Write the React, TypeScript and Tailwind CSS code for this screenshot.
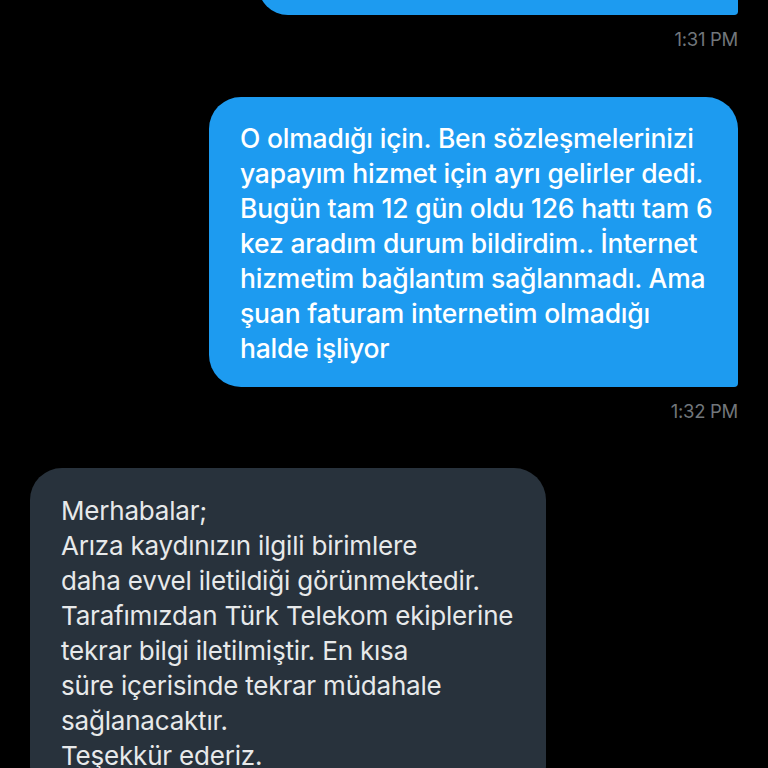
import React from 'react';

const font = { fontFamily: 'Inter, "Noto Sans", sans-serif' };

const Timestamp = ({ time }: { time: string }) => (
    <div className="flex justify-end mt-[14px] text-[18.5px] leading-[20px] text-[#71767b] tracking-[-0.3px]">{time}</div>
);

const sent = `O olmadığı için. Ben sözleşmelerinizi
yapayım hizmet için ayrı gelirler dedi.
Bugün tam 12 gün oldu 126 hattı tam 6
kez aradım durum bildirdim.. İnternet
hizmetim bağlantım sağlanmadı. Ama
şuan faturam internetim olmadığı
halde işliyor`;

const received = `Merhabalar;
Arıza kaydınızın ilgili birimlere
daha evvel iletildiği görünmektedir.
Tarafımızdan Türk Telekom ekiplerine
tekrar bilgi iletilmiştir. En kısa
süre içerisinde tekrar müdahale
sağlanacaktır.
Teşekkür ederiz.`;

export default function App() {
    return (
        <div className="w-[768px] h-[768px] bg-black overflow-hidden" style={font}>
            <div className="pl-[30px] pr-[30px]">
                <div className="flex justify-end">
                    <div className="w-[480px] h-[60px] -mt-[45px] bg-[#1d9bf0] rounded-bl-[32px] rounded-tl-[32px] rounded-tr-[32px] rounded-br-[4px]" />
                </div>
                <Timestamp time="1:31 PM" />

                <div className="flex justify-end mt-[48px]">
                    <div className="w-[529px] bg-[#1d9bf0] text-white rounded-tl-[32px] rounded-tr-[32px] rounded-bl-[32px] rounded-br-[4px] pl-[31px] pr-[10px] pt-[24px] pb-[21px] text-[26.5px] font-medium leading-[35px] tracking-[-0.2px] whitespace-pre-line">
                        {sent}
                    </div>
                </div>
                <Timestamp time="1:32 PM" />

                <div className="flex justify-start mt-[47px]">
                    <div className="w-[516px] bg-[#28323c] text-[#e7e9ea] rounded-[32px] pl-[31px] pr-[10px] pt-[25px] pb-[24px] text-[26px] leading-[35px] tracking-[-0.2px] whitespace-pre-line">
                        {received}
                    </div>
                </div>
            </div>
        </div>
    );
}
